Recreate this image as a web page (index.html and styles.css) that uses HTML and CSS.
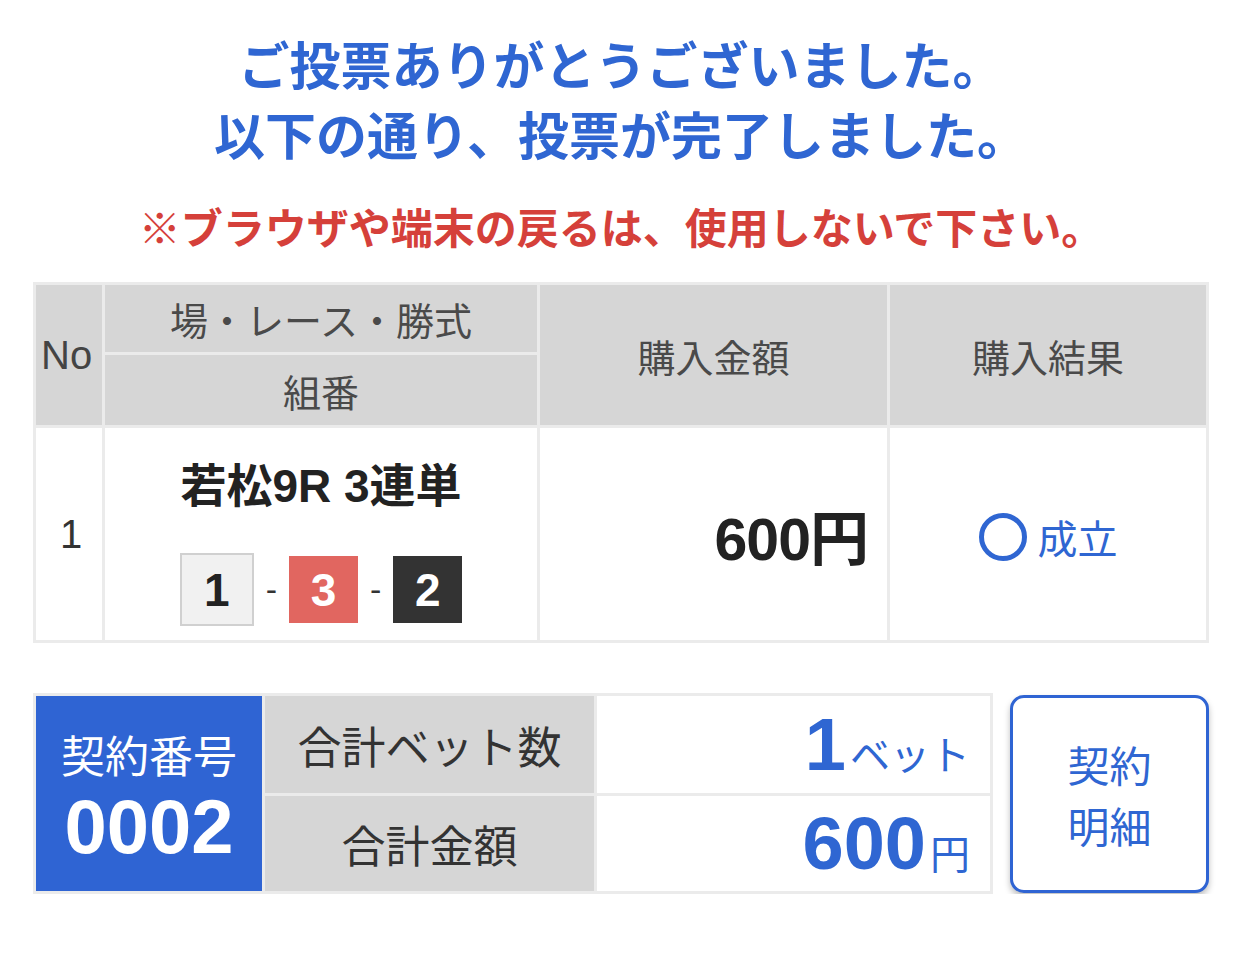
FILE: index.html
```html
<!DOCTYPE html>
<html lang="ja">
<head>
<meta charset="utf-8">
<title>投票完了</title>
<link rel="stylesheet" href="styles.css">
</head>
<body>
<div class="page">
  <h1 class="thanks">ご投票ありがとうございました。<br>以下の通り、投票が完了しました。</h1>
  <p class="warn">※ブラウザや端末の戻るは、使用しないで下さい。</p>

  <table class="bets">
    <colgroup>
      <col class="c-no"><col class="c-race"><col class="c-amt"><col class="c-res">
    </colgroup>
    <tr class="h1row">
      <th rowspan="2" class="no-h">No</th>
      <th>場・レース・勝式</th>
      <th rowspan="2">購入金額</th>
      <th rowspan="2">購入結果</th>
    </tr>
    <tr class="h2row">
      <th>組番</th>
    </tr>
    <tr class="body-row">
      <td class="no">1</td>
      <td class="race">
        <div class="race-name">若松9R 3連単</div>
        <div class="combo">
          <span class="box b1">1</span><span class="dash">-</span><span class="box b3">3</span><span class="dash">-</span><span class="box b2">2</span>
        </div>
      </td>
      <td class="amount">600円</td>
      <td class="result"><span class="ring"></span><span>成立</span></td>
    </tr>
  </table>

  <div class="summary">
    <table class="totals">
      <colgroup>
        <col class="c-contract"><col class="c-label"><col class="c-val">
      </colgroup>
      <tr class="t-row">
        <td rowspan="2" class="contract"><div class="c-title">契約番号</div><div class="c-num">0002</div></td>
        <td class="label">合計ベット数</td>
        <td class="val"><span class="big">1</span><span class="unit">ベット</span></td>
      </tr>
      <tr class="t-row2">
        <td class="label">合計金額</td>
        <td class="val"><span class="big">600</span><span class="unit">円</span></td>
      </tr>
    </table>
    <button class="detail"><span class="d-line">契約</span><span class="d-line">明細</span></button>
  </div>
</div>
</body>
</html>
```

FILE: styles.css
```css
html, body {
  margin: 0;
  padding: 0;
  background: #ffffff;
}

body {
  font-family: "Liberation Sans", "Noto Sans CJK JP", sans-serif;
  color: #222;
}

.page {
  padding: 28px 33px 0;
}

.thanks {
  margin: 0;
  text-align: center;
  font-size: 51px;
  line-height: 70px;
  font-weight: 700;
  color: #2f66d2;
  font-family: "Noto Sans CJK JP", sans-serif;
}

.warn {
  margin: 28px 0 26px;
  text-align: center;
  font-size: 42px;
  line-height: 60px;
  font-weight: 700;
  color: #d5403a;
  font-family: "Noto Sans CJK JP", sans-serif;
}

.bets,
.totals {
  border-collapse: separate;
  border-spacing: 3px;
  background: #ebebeb;
  table-layout: fixed;
}

.bets {
  width: 1176px;
}

.c-no { width: 66px; }
.c-race { width: 432px; }
.c-amt { width: 347px; }
.c-res { width: 316px; }

.bets th {
  background: #d6d6d6;
  color: #4a4a4a;
  font-weight: 400;
  font-size: 38px;
  padding: 0;
  text-align: center;
  vertical-align: middle;
}

.bets th.no-h {
  text-align: left;
  padding-left: 5px;
  font-size: 40px;
  color: #444;
}

.h1row { height: 67px; }
.h2row { height: 70px; }

.bets td {
  background: #fff;
  padding: 0;
  vertical-align: middle;
}

.body-row { height: 212px; }

.no {
  font-size: 40px;
  color: #333;
  padding-left: 24px !important;
}

.race {
  text-align: center;
  padding: 33px 0 14px !important;
}

.race-name {
  font-size: 46px;
  line-height: 50px;
  font-weight: 700;
  color: #222;
}

.combo {
  margin-top: 42px;
  display: flex;
  justify-content: center;
  align-items: center;
  height: 73px;
}

.box {
  display: flex;
  align-items: center;
  justify-content: center;
  width: 69px;
  height: 67px;
  font-size: 46px;
  font-weight: 700;
}

.b1 {
  width: 70px;
  height: 69px;
  background: #f1f1f1;
  border: 2px solid #d0d0d0;
  color: #222;
}

.b3 {
  background: #e16660;
  color: #fff;
}

.b2 {
  background: #333333;
  color: #fff;
}

.dash {
  font-size: 34px;
  color: #333;
  padding: 0 12px;
  font-weight: 400;
}

.amount {
  text-align: right;
  padding-right: 19px !important;
  font-size: 59px;
  font-weight: 700;
  color: #222;
  letter-spacing: -1px;
}

.result {
  text-align: center;
  color: #2f66d2;
  font-size: 40px;
  font-family: "Noto Sans CJK JP", sans-serif;
}

.result span {
  vertical-align: middle;
}

.ring {
  display: inline-block;
  width: 38px;
  height: 38px;
  border: 5px solid #2f66d2;
  border-radius: 50%;
  margin-right: 11px;
}

.summary {
  margin-top: 50px;
  display: flex;
  align-items: flex-start;
  gap: 17px;
}

.totals {
  width: 960px;
}

.c-contract { width: 226px; }
.c-label { width: 329px; }
.c-val { width: 393px; }

.t-row { height: 97px; }
.t-row2 { height: 95px; }

.totals td {
  padding: 0;
  vertical-align: middle;
}

.contract {
  background: #2f64d3;
  color: #fff;
  text-align: center;
}

.c-title {
  font-size: 44px;
  line-height: 66px;
  font-family: "Noto Sans CJK JP", sans-serif;
}

.c-num {
  font-size: 76px;
  line-height: 80px;
  font-weight: 700;
}

.label {
  background: #d6d6d6;
  color: #333;
  text-align: center;
  font-size: 44px;
  font-family: "Noto Sans CJK JP", sans-serif;
}

.val {
  background: #fff;
  text-align: right;
  padding-right: 20px !important;
  color: #2f66d2;
  white-space: nowrap;
}

.big {
  font-size: 74px;
  font-weight: 700;
  line-height: 1;
}

.unit {
  font-size: 40px;
  margin-left: 4px;
  font-family: "Noto Sans CJK JP", sans-serif;
}

.detail {
  width: 199px;
  height: 198px;
  margin-top: 2px;
  border: 3px solid #2f64d3;
  border-radius: 14px;
  background: #fff;
  color: #2f66d2;
  font-size: 42px;
  font-family: "Noto Sans CJK JP", sans-serif;
  box-shadow: 0 4px 6px rgba(0, 0, 0, 0.25);
  padding: 0;
  cursor: pointer;
  display: flex;
  flex-direction: column;
  align-items: center;
  justify-content: center;
}

.d-line {
  display: block;
  line-height: 61px;
  height: 61px;
}
```
